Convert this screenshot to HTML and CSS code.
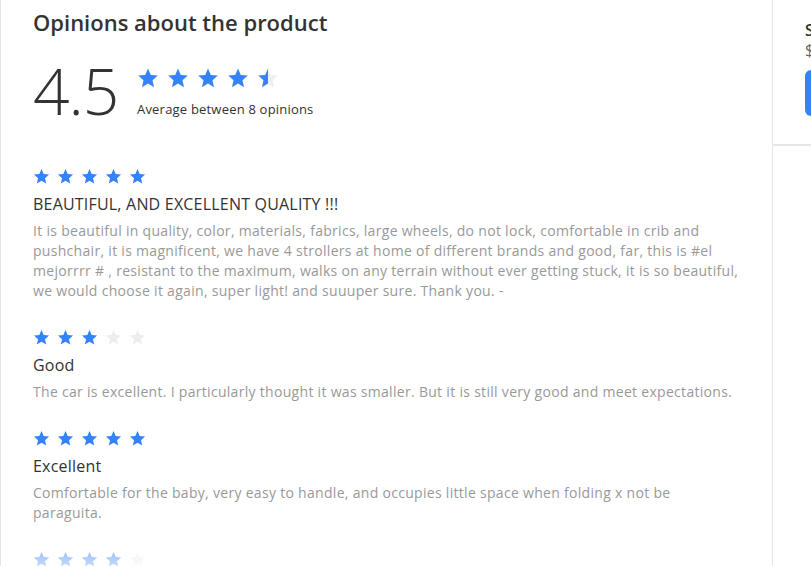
FILE: index.html
```html
<!DOCTYPE html>
<html>
<head>
<meta charset="utf-8">
<link rel="stylesheet" href="styles.css">
</head>
<body>
<svg width="0" height="0" class="defs">
  <defs>
    <symbol id="star" viewBox="0 0 24 24"><path d="M12 1.5l3.1 7.1 7.6.7-5.8 5.1 1.7 7.6L12 18l-6.6 4 1.7-7.6-5.8-5.1 7.6-.7z"/></symbol>
    <linearGradient id="half"><stop offset="50%" stop-color="#3483fa"/><stop offset="50%" stop-color="#eeeeee"/></linearGradient>
  </defs>
</svg>
<div class="page">
  <section class="reviews">
    <h1 class="title">Opinions about the product</h1>
    <div class="summary">
      <div class="score">4.5</div>
      <div class="summary-info">
        <div class="stars stars-big">
          <svg class="on"><use href="#star"/></svg>
          <svg class="on"><use href="#star"/></svg>
          <svg class="on"><use href="#star"/></svg>
          <svg class="on"><use href="#star"/></svg>
          <svg class="half"><use href="#star"/></svg>
        </div>
        <div class="avg">Average between 8 opinions</div>
      </div>
    </div>
    <div class="list">
      <article class="review">
        <div class="stars">
          <svg class="on"><use href="#star"/></svg><svg class="on"><use href="#star"/></svg><svg class="on"><use href="#star"/></svg><svg class="on"><use href="#star"/></svg><svg class="on"><use href="#star"/></svg>
        </div>
        <h2 class="r-title">BEAUTIFUL, AND EXCELLENT QUALITY !!!</h2>
        <p class="r-body">It is beautiful in quality, color, materials, fabrics, large wheels, do not lock, comfortable in crib and pushchair, it is magnificent, we have 4 strollers at home of different brands and good, far, this is #el mejorrrr # , resistant to the maximum, walks on any terrain without ever getting stuck, it is so beautiful, we would choose it again, super light! and suuuper sure. Thank you. -</p>
      </article>
      <article class="review">
        <div class="stars">
          <svg class="on"><use href="#star"/></svg><svg class="on"><use href="#star"/></svg><svg class="on"><use href="#star"/></svg><svg class="off"><use href="#star"/></svg><svg class="off"><use href="#star"/></svg>
        </div>
        <h2 class="r-title">Good</h2>
        <p class="r-body">The car is excellent. I particularly thought it was smaller. But it is still very good and meet expectations.</p>
      </article>
      <article class="review">
        <div class="stars">
          <svg class="on"><use href="#star"/></svg><svg class="on"><use href="#star"/></svg><svg class="on"><use href="#star"/></svg><svg class="on"><use href="#star"/></svg><svg class="on"><use href="#star"/></svg>
        </div>
        <h2 class="r-title">Excellent</h2>
        <p class="r-body">Comfortable for the baby, very easy to handle, and occupies little space when folding x not be paraguita.</p>
      </article>
      <article class="review">
        <div class="stars">
          <svg class="on"><use href="#star"/></svg><svg class="on"><use href="#star"/></svg><svg class="on"><use href="#star"/></svg><svg class="on"><use href="#star"/></svg><svg class="off"><use href="#star"/></svg>
        </div>
        <h2 class="r-title">Very good</h2>
        <p class="r-body">Very good product.</p>
      </article>
    </div>
    <div class="fade"></div>
  </section>
  <aside class="side">
    <div class="side-top">
      <div class="side-title">Seller</div>
      <div class="side-price">$ 1.999</div>
      <div class="side-btn">Buy</div>
    </div>
  </aside>
</div>
</body>
</html>
```

FILE: styles.css
```css
* { box-sizing: border-box; }
html, body { margin: 0; padding: 0; background: #fff; }
body { font-family: "Open Sans", "Liberation Sans", sans-serif; color: #333; overflow: hidden; height: 566px; }
.defs { position: absolute; }
.page { display: flex; height: 566px; }
.reviews {
  position: relative;
  width: 773px;
  flex: none;
  border-left: 1px solid #e6e6e6;
  border-right: 1px solid #e6e6e6;
  padding: 8px 32px 0 32px;
  overflow: hidden;
}
.title { margin: 0; font-size: 22px; font-weight: 600; color: #333; line-height: 28px; }
.summary { display: flex; align-items: flex-start; margin-top: 27px; }
.score { font-size: 64px; font-weight: 300; line-height: 60px; color: #333; width: 104px; margin-top: -2px; letter-spacing: -1px; }
.summary-info { display: flex; flex-direction: column; padding-top: 4px; }
.stars { display: flex; gap: 7px; }
.stars svg { width: 17px; height: 17px; }
.stars-big { gap: 8px; }
.stars-big svg { width: 22px; height: 22px; }
.on { fill: #3483fa; }
.off { fill: #eeeeee; }
.half { fill: url(#half); }
.avg { font-size: 13px; margin-top: 11px; color: #333; letter-spacing: 0.2px; }
.list { margin-top: 47px; display: flex; flex-direction: column; gap: 28px; }
.review { display: flex; flex-direction: column; }
.r-title { margin: 8px 0 0; font-size: 16px; font-weight: 400; line-height: 22px; color: #333; letter-spacing: 0.2px; }
.r-body { margin: 6px 0 0; font-size: 14px; line-height: 20px; color: #999; letter-spacing: 0.3px; }
.fade { position: absolute; left: 0; right: 0; bottom: 0; height: 50px; background: linear-gradient(rgba(255,255,255,0), rgba(255,255,255,0.7)); }
.side { flex: 1; }
.side-top { padding: 20px 0 28px 32px; border-bottom: 2px solid #e6e6e6; }
.side-title { font-size: 16px; font-weight: 600; line-height: 20px; white-space: nowrap; }
.side-price { font-size: 16px; color: #666; line-height: 20px; white-space: nowrap; }
.side-btn { margin-top: 10px; height: 46px; background: #3483fa; border-radius: 6px; color: #fff; padding: 14px; width: 300px; }
```
